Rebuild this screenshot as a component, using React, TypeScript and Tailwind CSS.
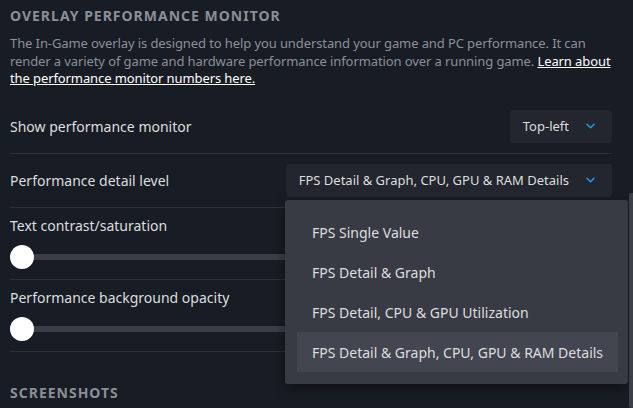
import React from "react";

const font = { fontFamily: '"Noto Sans", "Open Sans", Arial, sans-serif' };

function Chevron() {
  return (
    <svg width="9" height="6" viewBox="0 0 9 6" fill="none" className="shrink-0">
      <path d="M1 1.2l3.5 3.5 3.5-3.5" stroke="#1a9fff" strokeWidth="1.4" strokeLinecap="round" strokeLinejoin="round" />
    </svg>
  );
}

function Dropdown({ label }: { label: string }) {
  return (
    <div className="h-[33px] flex items-center pl-[13px] pr-[17px] gap-[17px] bg-[#23262e] rounded-[3px] text-[13px] text-[#dcdedf]">
      <span className="pt-[2px]">{label}</span>
      <Chevron />
    </div>
  );
}

function SliderRow({ label }: { label: string }) {
  return (
    <div className="pt-[9px] pb-[10px] border-b border-[#2b3039]">
      <div className="text-[14px] leading-[18px] text-[#dcdedf]">{label}</div>
      <div className="mt-[10px] h-[24px] relative flex items-center">
        <div className="w-full h-[6px] bg-[#3a3e47] rounded-full" />
        <div className="absolute left-0 top-0 w-[24px] h-[24px] rounded-full bg-white" />
      </div>
    </div>
  );
}

export default function App() {
  const items = [
    "FPS Single Value",
    "FPS Detail & Graph",
    "FPS Detail, CPU & GPU Utilization",
    "FPS Detail & Graph, CPU, GPU & RAM Details",
  ];
  return (
    <div className="w-[633px] h-[408px] bg-[#181c24] relative overflow-hidden" style={font}>
      <div className="w-[602px] ml-[10px]">
        <div className="pt-[6px] text-[14px] leading-[20px] font-bold tracking-[1px] text-[#8a8f98]">
          OVERLAY PERFORMANCE MONITOR
        </div>
        <div className="mt-[9px] text-[13px] tracking-[-0.1px] leading-[17.5px] text-[#8b9099]">
          The In-Game overlay is designed to help you understand your game and PC performance. It can render a variety of game and hardware performance information over a running game.{" "}
          <span className="text-white underline">Learn about the performance monitor numbers here.</span>
        </div>
        <div className="mt-[12px] py-[10px] flex items-center justify-between border-b border-[#2b3039]">
          <span className="text-[14px] text-[#dcdedf]">Show performance monitor</span>
          <Dropdown label="Top-left" />
        </div>
        <div className="py-[10px] flex items-center justify-between border-b border-[#2b3039]">
          <span className="text-[14px] text-[#dcdedf]">Performance detail level</span>
          <Dropdown label="FPS Detail & Graph, CPU, GPU & RAM Details" />
        </div>
        <SliderRow label="Text contrast/saturation" />
        <SliderRow label="Performance background opacity" />
        <div className="mt-[31px] text-[14px] leading-[20px] font-bold tracking-[1px] text-[#8a8f98]">
          SCREENSHOTS
        </div>
      </div>

      <div className="absolute left-[285px] top-[200px] w-[343px] py-[12px] bg-[#383b44] rounded-[3px] shadow-[0_4px_12px_rgba(0,0,0,0.4)]">
        {items.map((t, i) => (
          <div
            key={t}
            className={
              "h-[40px] mx-[12px] pl-[15px] flex items-center text-[14px] text-[#dcdedf] " +
              (i === 3 ? "bg-[#434650] mr-[10px]" : "")
            }
          >
            {t}
          </div>
        ))}
      </div>

      <div className="absolute right-0 top-[193px] w-[4px] h-[215px] bg-[#3b3f49] rounded-l-[2px]" />
    </div>
  );
}
